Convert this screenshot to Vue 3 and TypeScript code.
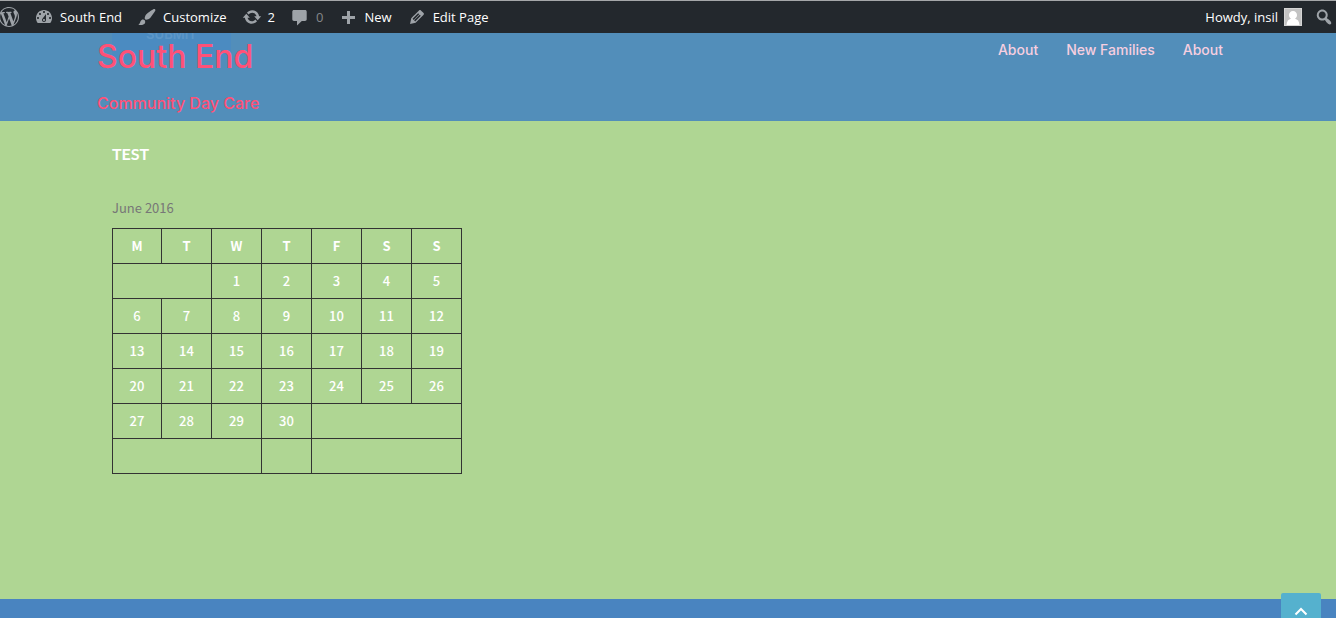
<script setup lang="ts">
interface BarItem {
  text: string
  label: string
  icon: string
  muted?: boolean
}

interface Cell {
  text: string
  span: number
}

const barItems: BarItem[] = [
  {
    text: 'South End',
    label: 'South End',
    icon: 'M3.76 16h12.48c1.1-1.37 1.76-3.11 1.76-5 0-4.42-3.58-8-8-8s-8 3.58-8 8c0 1.89.66 3.63 1.76 5zM10 4c.55 0 1 .45 1 1s-.45 1-1 1-1-.45-1-1 .45-1 1-1zM6 6c.55 0 1 .45 1 1s-.45 1-1 1-1-.45-1-1 .45-1 1-1zm8 0c.55 0 1 .45 1 1s-.45 1-1 1-1-.45-1-1 .45-1 1-1zm-5.37 5.55L12 7v6c0 1.1-.9 2-2 2s-2-.9-2-2c0-.57.24-1.08.63-1.45zM4 10c.55 0 1 .45 1 1s-.45 1-1 1-1-.45-1-1 .45-1 1-1zm12 0c.55 0 1 .45 1 1s-.45 1-1 1-1-.45-1-1 .45-1 1-1zm-5 3c0-.55-.45-1-1-1s-1 .45-1 1 .45 1 1 1 1-.45 1-1z',
  },
  {
    text: 'Customize',
    label: 'Customize',
    icon: 'M18.33 3.57s.27-.8-.31-1.36c-.53-.52-1.22-.24-1.22-.24-.61.3-5.76 3.47-7.67 5.57-.86.96-2.06 3.79-1.09 4.82.92.98 3.96-.17 4.79-1 2.06-2.06 5.21-7.17 5.5-7.79zM1.4 17.65c2.37-1.56 1.46-3.41 3.23-4.64.93-.65 2.22-.62 3.08.29.63.67.8 2.57-.16 3.46-1.57 1.45-4 1.55-6.15.89z',
  },
  {
    text: '2',
    label: '2 updates',
    icon: 'M10.2 3.28c3.53 0 6.43 2.61 6.92 6h2.08l-3.5 4-3.5-4h2.32c-.45-1.97-2.21-3.45-4.32-3.45-1.45 0-2.73.71-3.54 1.78L4.95 5.66C6.23 4.2 8.11 3.28 10.2 3.28zm-.4 13.44c-3.52 0-6.43-2.61-6.92-6H.8l3.5-4c1.17 1.33 2.33 2.67 3.5 4H5.48c.45 1.97 2.21 3.45 4.32 3.45 1.45 0 2.73-.71 3.54-1.78l1.71 1.95c-1.28 1.46-3.15 2.38-5.25 2.38z',
  },
  {
    text: '0',
    label: '0 comments',
    icon: 'M4 3h11c1 0 1.7.7 1.7 1.7v7.6c0 1-.7 1.7-1.7 1.7h-3.2L7 18.5V14H4c-1 0-1.7-.7-1.7-1.7V4.7C2.300 3.700 3 3 4 3z',
    muted: true,
  },
  {
    text: 'New',
    label: 'New',
    icon: 'M17 9v3h-5v5H9v-5H4V9h5V4h3v5h5z',
  },
  {
    text: 'Edit Page',
    label: 'Edit Page',
    icon: 'M13.89 3.39l2.71 2.72c.46.46.42 1.24.03 1.64l-8.01 8.02-5.56 1.16 1.16-5.58s7.6-7.63 7.99-8.03c.39-.39 1.22-.39 1.68.07zm-2.73 2.79l-5.59 5.61 1.11 1.11 5.54-5.65zm-2.97 8.23l5.58-5.6-1.07-1.08-5.59 5.6z',
  },
]

const navLinks: string[] = ['About', 'New Families', 'About']
const weekdays: string[] = ['M', 'T', 'W', 'T', 'F', 'S', 'S']

function buildWeeks(offset: number, days: number): Cell[][] {
  const rows: Cell[][] = []
  let row: Cell[] = offset > 0 ? [{ text: '', span: offset }] : []
  let filled = offset
  for (let day = 1; day <= days; day++) {
    row.push({ text: String(day), span: 1 })
    filled++
    if (filled === 7) {
      rows.push(row)
      row = []
      filled = 0
    }
  }
  if (filled > 0) {
    row.push({ text: '', span: 7 - filled })
    rows.push(row)
  }
  return rows
}

const weeks = buildWeeks(2, 30)
</script>

<template>
  <div class="page">
    <div class="admin-bar">
      <div class="bar-group">
        <a class="bar-item" href="#" aria-label="WordPress">
          <svg class="wp-icon" viewBox="1 0 19 20" aria-hidden="true">
            <path d="M20 10c0-5.51-4.49-10-10-10C4.48 0 0 4.49 0 10c0 5.52 4.48 10 10 10 5.51 0 10-4.48 10-10zM7.78 15.37L4.37 6.22c.55-.02 1.17-.08 1.17-.08.5-.06.44-1.13-.06-1.11 0 0-1.45.11-2.37.11-.18 0-.37 0-.58-.01C4.12 2.69 6.87 1.11 10 1.11c2.33 0 4.45.87 6.05 2.34-.68-.11-1.65.39-1.65 1.58 0 .74.45 1.36.9 2.1.35.61.55 1.36.55 2.46 0 1.49-1.4 5-1.4 5l-3.03-8.37c.54-.02.82-.17.82-.17.5-.05.44-1.25-.06-1.22 0 0-1.44.12-2.38.12-.87 0-2.33-.12-2.33-.12-.5-.03-.56 1.2-.06 1.22l.92.08 1.26 3.41zM17.41 10c.24-.64.74-1.87.43-4.25.7 1.29 1.05 2.71 1.05 4.25 0 3.29-1.73 6.24-4.4 7.78.97-2.59 1.94-5.2 2.92-7.78zM6.1 18.09C3.12 16.65 1.11 13.53 1.11 10c0-1.3.23-2.48.72-3.59C3.25 10.3 4.67 14.2 6.1 18.09zm4.03-6.63l2.58 6.98c-.86.29-1.76.45-2.71.45-.79 0-1.57-.11-2.29-.33.81-2.38 1.62-4.74 2.42-7.1z" />
          </svg>
        </a>
        <a
          v-for="item in barItems"
          :key="item.label"
          class="bar-item"
          :class="{ muted: item.muted }"
          href="#"
          :aria-label="item.label"
        >
          <svg class="bar-icon" viewBox="0 0 20 20" aria-hidden="true"><path :d="item.icon" /></svg>
          <span>{{ item.text }}</span>
        </a>
      </div>
      <div class="bar-group account-group">
        <a class="bar-item" href="#">
          <span>Howdy, insil</span>
          <svg class="avatar" viewBox="0 0 18 18" aria-hidden="true">
            <rect width="18" height="18" fill="#d5d5d5" />
            <rect x="1" y="1" width="16" height="16" fill="#c3c3c3" />
            <path fill="#fff" d="M9 3c2.400 0 4 1.700 4 4 0 1.700-.8 3-2 3.800 2.600.6 4.200 2.300 4.500 6.200h-13c.3-3.900 1.900-5.600 4.500-6.200C5.800 10 5 8.700 5 7c0-2.300 1.600-4 4-4z" />
          </svg>
        </a>
        <button class="search-button" type="button" aria-label="Search">
          <svg class="bar-icon" viewBox="0 0 20 20" aria-hidden="true">
            <path d="M12.14 4.18c1.87 1.87 2.11 4.75.72 6.89.12.1.22.21.36.31.2.16.47.36.81.59.34.24.56.39.66.47.42.31.73.57.94.78.32.32.6.65.84 1 .25.35.44.69.59 1.04.14.35.21.68.18 1-.02.32-.14.59-.36.81s-.49.34-.81.36c-.31.02-.65-.04-.99-.19-.35-.14-.7-.34-1.04-.59-.35-.24-.68-.52-1-.84-.21-.21-.47-.52-.77-.93-.1-.13-.25-.35-.47-.66-.22-.32-.4-.57-.56-.78-.16-.2-.29-.35-.44-.5-2.07 1.09-4.69.76-6.44-.98-2.14-2.15-2.14-5.64 0-7.78 2.15-2.15 5.63-2.15 7.78 0zm-1.41 6.36c1.36-1.37 1.36-3.58 0-4.95-1.37-1.37-3.59-1.37-4.95 0-1.37 1.37-1.37 3.58 0 4.95 1.36 1.37 3.58 1.37 4.95 0z" />
          </svg>
        </button>
      </div>
    </div>

    <header class="site-header">
      <div class="container header-inner">
        <button class="submit-button" type="button">SUBMIT</button>
        <div class="branding">
          <h1 class="site-title"><a href="#">South End</a></h1>
          <p class="tagline">Community Day Care</p>
        </div>
        <nav class="site-nav" aria-label="Main">
          <a v-for="(link, i) in navLinks" :key="i" href="#">{{ link }}</a>
        </nav>
      </div>
    </header>

    <main class="container content">
      <h2 class="page-title">TEST</h2>
      <table class="calendar">
        <caption>June 2016</caption>
        <colgroup>
          <col class="first-col" />
          <col span="6" class="day-col" />
        </colgroup>
        <thead>
          <tr>
            <th v-for="(day, i) in weekdays" :key="i" scope="col">{{ day }}</th>
          </tr>
        </thead>
        <tbody>
          <tr v-for="(week, w) in weeks" :key="w">
            <td v-for="(cell, c) in week" :key="c" :colspan="cell.span">{{ cell.text }}</td>
          </tr>
        </tbody>
        <tfoot>
          <tr>
            <td colspan="3"></td>
            <td></td>
            <td colspan="3"></td>
          </tr>
        </tfoot>
      </table>
    </main>

    <footer class="site-footer">
      <button class="to-top" type="button" aria-label="Back to top">
        <svg viewBox="0 0 14 9" aria-hidden="true"><path d="M1.500 7.500L7 2l5.500 5.500" /></svg>
      </button>
    </footer>
  </div>
</template>

<style>
body {
  margin: 0;
}
</style>

<style scoped>
.page {
  display: flex;
  flex-direction: column;
  min-height: 100vh;
  overflow: hidden;
  background: #afd693;
  font-family: "Noto Sans CJK SC", "Noto Sans", sans-serif;
}

a {
  color: inherit;
  text-decoration: none;
}

button {
  padding: 0;
  border: 0;
  cursor: pointer;
}

.admin-bar {
  position: relative;
  z-index: 1;
  display: flex;
  justify-content: space-between;
  height: 32px;
  border-top: 1px solid #a5a7a9;
  background: #23282d;
  color: #fff;
  font-family: "Open Sans", sans-serif;
  font-size: 13px;
  line-height: 32px;
}

.bar-group {
  display: flex;
  align-items: center;
  gap: 15px;
}

.bar-item {
  display: flex;
  align-items: center;
  gap: 6px;
}

.bar-item.muted span {
  color: #84878a;
}

.wp-icon,
.bar-icon {
  display: block;
  height: 20px;
  fill: #9ea3a8;
}

.wp-icon {
  width: 19px;
}

.bar-icon {
  width: 20px;
}

.account-group {
  gap: 12px;
  padding-right: 2px;
}

.avatar {
  width: 18px;
  height: 18px;
}

.search-button {
  background: none;
}

.site-header {
  background: #528eba;
  color: #ff5177;
  font-family: Inter, sans-serif;
}

.container {
  box-sizing: border-box;
  width: 100%;
  max-width: 1142px;
  margin: 0 auto;
}

.header-inner {
  position: relative;
  display: flex;
  justify-content: space-between;
  height: 88px;
}

.submit-button {
  position: absolute;
  top: -14px;
  left: 15px;
  width: 119px;
  height: 41px;
  padding-bottom: 12px;
  border-radius: 3px;
  background: #4b8bc1;
  color: #5d97c8;
  font: 600 13px/28px Inter, sans-serif;
}

.branding {
  position: relative;
}

.site-title {
  margin: 0;
  font-size: 32px;
  font-weight: 500;
  line-height: 48px;
}

.tagline {
  margin: 10px 0 0;
  font-size: 16px;
  font-weight: 500;
  line-height: 24px;
}

.site-nav {
  display: flex;
  gap: 28px;
  padding: 5px 16px 0 0;
  color: #f7cfe0;
  font-size: 14px;
  font-weight: 500;
  line-height: 24px;
}

.content {
  flex: 1;
  padding: 21px 15px;
}

.page-title {
  margin: 0 0 30px;
  color: #fff;
  font-family: Lato, sans-serif;
  font-size: 16px;
  font-weight: 700;
  line-height: 24px;
}

.calendar {
  width: 350px;
  border-collapse: collapse;
  table-layout: fixed;
  color: #fff;
  font-size: 13px;
  line-height: 24px;
  text-align: center;
}

.first-col {
  width: 49px;
}

.day-col {
  width: 50px;
}

.calendar caption {
  padding-bottom: 8px;
  color: #777;
  text-align: left;
}

.calendar th,
.calendar td {
  box-sizing: border-box;
  height: 35px;
  padding: 0;
  border: 1px solid #333;
}

.calendar td {
  font-weight: 500;
}

.site-footer {
  position: relative;
  height: 19px;
  background: #4984c0;
}

.to-top {
  position: absolute;
  top: -6px;
  right: 15px;
  display: flex;
  justify-content: center;
  width: 40px;
  height: 40px;
  padding-top: 14px;
  border-radius: 2px;
  background: #55b1ce;
}

.to-top svg {
  width: 14px;
  height: 9px;
  fill: none;
  stroke: #fff;
  stroke-width: 2;
}
</style>
